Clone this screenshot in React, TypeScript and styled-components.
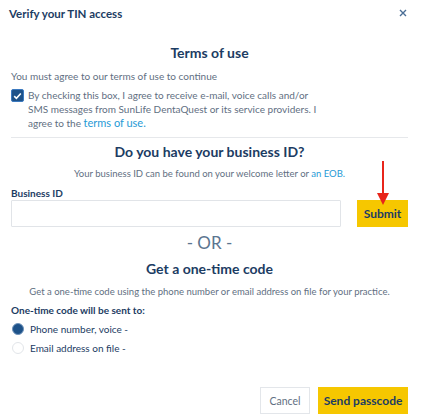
import styled, { createGlobalStyle } from "styled-components";

const Global = createGlobalStyle`
  html, body {
    margin: 0;
    padding: 0;
    background: #ffffff;
  }
  body {
    font-family: "Lato", "Liberation Sans", sans-serif;
    color: #1c3c63;
  }
`;

const navy = "#1c3c63";
const grey = "#5f6f82";
const link = "#1f9ad6";

const Dialog = styled.div`
  width: 423px;
  height: 419px;
  box-sizing: border-box;
  padding: 0 15px 0 11px;
  display: flex;
  flex-direction: column;
`;

const Header = styled.div`
  display: flex;
  align-items: center;
  justify-content: space-between;
  height: 26px;
  margin-left: -2px;
`;

const Title = styled.h2`
  margin: 0;
  font-size: 11.5px;
  font-weight: 700;
  color: ${navy};
`;

const Close = styled.button`
  border: 0;
  background: none;
  padding: 0;
  width: 14px;
  height: 14px;
  display: flex;
  align-items: center;
  justify-content: center;
  margin-right: -2px;
`;

const Heading = styled.h3`
  margin: 0;
  text-align: center;
  font-size: 14px;
  line-height: 18px;
  font-weight: 700;
  color: ${navy};
`;

const Muted = styled.p<{ $center?: boolean }>`
  margin: 0;
  font-size: ${(p) => (p.$center ? 9.5 : 10)}px;
  line-height: 14px;
  color: ${grey};
  text-align: ${(p) => (p.$center ? "center" : "left")};
`;

const Link = styled.a<{ $big?: boolean }>`
  color: ${link};
  text-decoration: none;
  font-size: ${(p) => (p.$big ? 11 : 9.5)}px;
`;

const CheckRow = styled.label`
  display: flex;
  align-items: flex-start;
  gap: 4px;
  font-size: 10px;
  line-height: 14px;
  color: ${grey};
`;

const Box = styled.span`
  flex: none;
  width: 13px;
  height: 13px;
  margin-top: 1px;
  box-sizing: border-box;
  background: #1e5289;
  border: 1px solid #3c7ac0;
  border-radius: 2px;
  display: flex;
  align-items: center;
  justify-content: center;
`;

const Divider = styled.hr`
  border: 0;
  border-top: 1px solid #e6e8eb;
  margin: 0;
`;

const FieldLabel = styled.div`
  font-size: 10px;
  line-height: 12px;
  font-weight: 700;
  color: ${navy};
`;

const FieldRow = styled.div`
  display: flex;
  align-items: center;
  gap: 16px;
  position: relative;
`;

const Input = styled.input`
  flex: 1;
  height: 27px;
  box-sizing: border-box;
  border: 1px solid #e1e4e8;
  border-radius: 1px;
  outline: none;
`;

const YellowButton = styled.button<{ $w: number }>`
  width: ${(p) => p.$w}px;
  height: 27px;
  border: 0;
  background: #f6c700;
  color: ${navy};
  font-family: inherit;
  font-weight: 700;
  font-size: 12px;
  padding: 0;
`;

const PlainButton = styled.button`
  width: 50px;
  height: 27px;
  background: #fff;
  border: 1px solid #e3e6ea;
  color: ${grey};
  font-family: inherit;
  font-size: 10.5px;
  padding: 0;
`;

const Arrow = styled.svg`
  position: absolute;
  right: 18px;
  top: -39px;
`;

const Or = styled.div`
  text-align: center;
  font-size: 17px;
  color: #5c7590;
  line-height: 20px;
`;

const Radio = styled.label`
  display: flex;
  align-items: center;
  gap: 6px;
  font-size: 10px;
  color: ${navy};
  height: 19px;
`;

const Dot = styled.span<{ $on?: boolean }>`
  width: 12px;
  height: 12px;
  border-radius: 50%;
  box-sizing: border-box;
  margin-left: 1px;
  background: ${(p) => (p.$on ? "#1e5289" : "#fff")};
  border: 1px solid ${(p) => (p.$on ? "#6f93bb" : "#e2e5e9")};
`;

const Footer = styled.div`
  display: flex;
  justify-content: flex-end;
  gap: 8px;
  margin-top: auto;
  margin-bottom: 5px;
`;

const Gap = styled.div<{ $h: number }>`
  height: ${(p) => p.$h}px;
  flex: none;
`;

export default function App() {
  return (
    <>
      <Global />
      <Dialog>
        <Header>
          <Title>Verify your TIN access</Title>
          <Close aria-label="close">
            <svg width="8" height="8" viewBox="0 0 8 8">
              <path d="M1 1L7 7M7 1L1 7" stroke="#4a6e96" strokeWidth="1.4" />
            </svg>
          </Close>
        </Header>
        <Gap $h={18} />
        <Heading>Terms of use</Heading>
        <Gap $h={7} />
        <Muted>You must agree to our terms of use to continue</Muted>
        <Gap $h={5} />
        <CheckRow>
          <Box>
            <svg width="9" height="8" viewBox="0 0 9 8">
              <path d="M1.2 4.2L3.4 6.3L7.8 1.5" stroke="#fff" strokeWidth="1.6" fill="none" />
            </svg>
          </Box>
          <span>
            By checking this box, I agree to receive e-mail, voice calls and/or
            <br />
            SMS messages from SunLife DentaQuest or its service providers. I
            <br />
            agree to the <Link $big>terms of use.</Link>
          </span>
        </CheckRow>
        <Gap $h={7} />
        <Divider />
        <Gap $h={5} />
        <Heading>Do you have your business ID?</Heading>
        <Gap $h={6} />
        <Muted $center>
          Your business ID can be found on your welcome letter or <Link>an EOB.</Link>
        </Muted>
        <Gap $h={6} />
        <FieldLabel>Business ID</FieldLabel>
        <Gap $h={1} />
        <FieldRow>
          <Input />
          <YellowButton $w={51}>Submit</YellowButton>
          <Arrow width="14" height="46" viewBox="0 0 14 46">
            <path d="M7 0V34" stroke="#e8251b" strokeWidth="2" />
            <path d="M1 32L7 44L13 32Z" fill="#e8251b" />
          </Arrow>
        </FieldRow>
        <Gap $h={6} />
        <Or>- OR -</Or>
        <Gap $h={7} />
        <Heading>Get a one-time code</Heading>
        <Gap $h={7} />
        <Muted $center>Get a one-time code using the phone number or email address on file for your practice.</Muted>
        <Gap $h={5} />
        <FieldLabel>One-time code will be sent to:</FieldLabel>
        <Gap $h={3} />
        <Radio>
          <Dot $on />
          Phone number, voice -
        </Radio>
        <Radio>
          <Dot />
          Email address on file -
        </Radio>
        <Footer>
          <PlainButton>Cancel</PlainButton>
          <YellowButton $w={90}>Send passcode</YellowButton>
        </Footer>
      </Dialog>
    </>
  );
}
